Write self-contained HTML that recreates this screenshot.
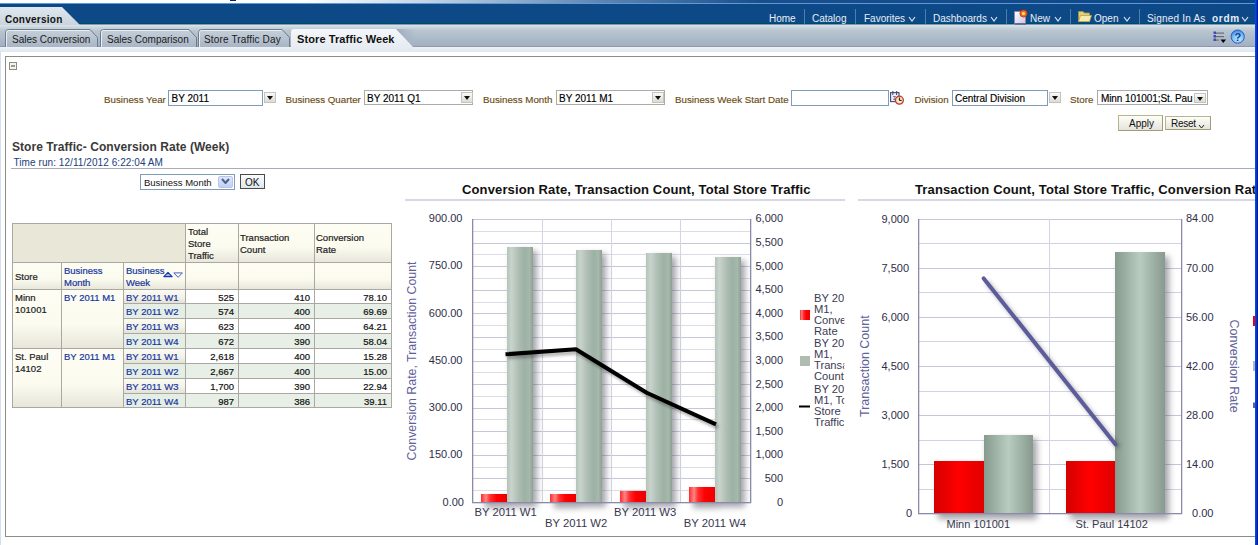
<!DOCTYPE html><html><head><meta charset="utf-8"><style>
*{margin:0;padding:0;box-sizing:border-box}
html,body{width:1258px;height:545px;overflow:hidden;background:#fff;font-family:"Liberation Sans",sans-serif;position:relative}
.a{position:absolute}
.t{position:absolute;white-space:nowrap;line-height:1}
.hl{color:#e8eef6;font-size:10px;top:14px}
.sep{position:absolute;top:9px;width:1px;height:15px;background:#4f7ea8}
.tabt{position:absolute;white-space:nowrap;line-height:1;top:35px;font-size:10px;color:#1a1a1a}
.prm{position:absolute;white-space:nowrap;line-height:1;color:#6a4c14;font-size:9.75px;top:95px;-webkit-text-stroke:0.15px #6a4c14}
.box{position:absolute;background:#fff;border:1px solid #7f9db9}
.gbox{position:absolute;background:#fff;border:1px solid #a9aca8}
.dd{position:absolute;width:12px;height:11px;background:linear-gradient(#fafaf6,#dcdcd4);border:1px solid #c4c4bc}
.dd:after{content:"";position:absolute;left:2px;top:3px;border-left:3.5px solid transparent;border-right:3.5px solid transparent;border-top:4px solid #111}
.bx{position:absolute;white-space:nowrap;line-height:1;font-size:10px;color:#000;top:94px;-webkit-text-stroke-width:0.15px}
.cell{position:absolute;-webkit-text-stroke-width:0.2px;border-right:1px solid #a9a9a1;border-bottom:1px solid #a9a9a1;font-size:9.5px;line-height:12px;white-space:nowrap;overflow:hidden}
.num{text-align:right;padding-right:4px}
.lnk{color:#1636a0}
</style></head><body>
<div class="a" style="left:0;top:0;width:1258px;height:3px;background:linear-gradient(90deg,#fff 0,#fff 300px,#c9d6e3 420px,#5f86b0 600px,#1a4f8a 760px,#0d4584 100%)"></div>
<div class="a" style="left:0;top:3px;width:1258px;height:1px;background:#5b9ae0"></div>
<div class="a" style="left:230px;top:0;width:6px;height:1px;background:#06206e"></div>
<div class="a" style="left:0;top:4px;width:1258px;height:19px;background:#0e4987"></div>
<div class="a" style="left:0;top:22px;width:1258px;height:1px;background:#05507e"></div>
<div class="a" style="left:0;top:23px;width:1258px;height:1px;background:#034672"></div>
<div class="a" style="left:0;top:24px;width:1258px;height:23px;background:linear-gradient(#7e9cb2 0,#7e9cb2 1px,#dce4ea 1px,#c6d2da 4px,#b8c5d0 7px,#adbac8 14px,#a4b0c2 22px)"></div>
<div class="a" style="left:0;top:46px;width:1258px;height:1px;background:#8e9aab"></div>
<div class="a" style="left:0;top:47px;width:1258px;height:5px;background:linear-gradient(#edf2f7,#dfe7ef)"></div>
<div class="a" style="left:0;top:52px;width:1px;height:493px;background:#d2dfee"></div>
<svg class="a" style="left:0;top:7px" width="90" height="18"><defs><linearGradient id="cg" x1="0" y1="0" x2="0" y2="1"><stop offset="0" stop-color="#dfe8ee"/><stop offset="1" stop-color="#c9d4dd"/></linearGradient></defs><path d="M0 0 H62 L80 18 H0 Z" fill="url(#cg)"/></svg>
<div class="t" style="left:5px;top:14.5px;font-size:10px;font-weight:bold;letter-spacing:0.25px;color:#111">Conversion</div>
<div class="t hl" style="left:1147px;letter-spacing:0.2px">Signed In As</div>
<div class="t hl" style="left:769px">Home</div>
<div class="t hl" style="left:812px">Catalog</div>
<div class="t hl" style="left:864px">Favorites</div>
<div class="t hl" style="left:933px">Dashboards</div>
<div class="t hl" style="left:1030px">New</div>
<div class="t hl" style="left:1094px">Open</div>
<div class="t hl" style="left:1212px;font-weight:bold;letter-spacing:0.7px">ordm</div>
<div class="sep" style="left:804px"></div>
<div class="sep" style="left:855px"></div>
<div class="sep" style="left:925px"></div>
<div class="sep" style="left:1006px"></div>
<div class="sep" style="left:1070px"></div>
<div class="sep" style="left:1139px"></div>
<svg class="a" style="left:908px;top:16px" width="8" height="6"><path d="M1 1 L4.0 5 L7 1" fill="none" stroke="#d8e2ee" stroke-width="1.2"/></svg>
<svg class="a" style="left:990px;top:16px" width="8" height="6"><path d="M1 1 L4.0 5 L7 1" fill="none" stroke="#d8e2ee" stroke-width="1.2"/></svg>
<svg class="a" style="left:1054px;top:16px" width="8" height="6"><path d="M1 1 L4.0 5 L7 1" fill="none" stroke="#d8e2ee" stroke-width="1.2"/></svg>
<svg class="a" style="left:1123px;top:16px" width="8" height="6"><path d="M1 1 L4.0 5 L7 1" fill="none" stroke="#d8e2ee" stroke-width="1.2"/></svg>
<svg class="a" style="left:1241px;top:16px" width="8" height="6"><path d="M1 1 L4.0 5 L7 1" fill="none" stroke="#d8e2ee" stroke-width="1.2"/></svg>
<svg class="a" style="left:1013px;top:9px" width="16" height="16"><defs><linearGradient id="pg" x1="0" y1="0" x2="1" y2="1"><stop offset="0" stop-color="#ffffff"/><stop offset="1" stop-color="#c8c4e4"/></linearGradient></defs><path d="M1.5 2.5 H10 L12.5 5 V14.5 H1.5 Z" fill="url(#pg)" stroke="#8a88b0" stroke-width="0.8"/><rect x="2" y="14.5" width="11" height="1" fill="#202048" opacity="0.6"/><circle cx="10.5" cy="4.5" r="3.6" fill="#e8701a" stroke="#c03010" stroke-width="0.8"/><circle cx="10.5" cy="4.5" r="1.6" fill="#ffe070"/></svg>
<svg class="a" style="left:1077px;top:10px" width="16" height="13"><path d="M1.5 1.5 H6 L7.5 3 H12.5 V11.5 H1.5 Z" fill="#e0cf78" stroke="#a8963a" stroke-width="0.8"/><path d="M1.5 11.5 L3.5 5.5 H14.5 L12.5 11.5 Z" fill="#f5ebb0" stroke="#b8a64a" stroke-width="0.8"/></svg>
<svg class="a" style="left:395px;top:29px" width="20" height="18"><defs><linearGradient id="tsh" x1="0" y1="0" x2="1" y2="0"><stop offset="0" stop-color="#8a9aac" stop-opacity="0.7"/><stop offset="1" stop-color="#a8b8c8" stop-opacity="0.2"/></linearGradient></defs><path d="M0 0 H19 V18 Z" fill="url(#tsh)"/></svg>
<svg class="a" style="left:5px;top:29px" width="94" height="18"><defs><linearGradient id="tg5" x1="0" y1="0" x2="0" y2="1"><stop offset="0" stop-color="#c5d0da"/><stop offset="1" stop-color="#a9b5c5"/></linearGradient></defs><path d="M0.5 18 V3.5 Q0.5 0.5 3.5 0.5 H85 L92.5 8.5 V18" fill="url(#tg5)" stroke="#6d7c8c" stroke-width="1"/><path d="M1.5 18 V3.5 Q1.5 1.5 3.5 1.5 H84.5" fill="none" stroke="#e6edf3" stroke-width="1"/></svg>
<svg class="a" style="left:100px;top:29px" width="98" height="18"><defs><linearGradient id="tg100" x1="0" y1="0" x2="0" y2="1"><stop offset="0" stop-color="#c5d0da"/><stop offset="1" stop-color="#a9b5c5"/></linearGradient></defs><path d="M0.5 18 V3.5 Q0.5 0.5 3.5 0.5 H89 L96.5 8.5 V18" fill="url(#tg100)" stroke="#6d7c8c" stroke-width="1"/><path d="M1.5 18 V3.5 Q1.5 1.5 3.5 1.5 H88.5" fill="none" stroke="#e6edf3" stroke-width="1"/></svg>
<svg class="a" style="left:198px;top:29px" width="93" height="18"><defs><linearGradient id="tg198" x1="0" y1="0" x2="0" y2="1"><stop offset="0" stop-color="#c5d0da"/><stop offset="1" stop-color="#a9b5c5"/></linearGradient></defs><path d="M0.5 18 V3.5 Q0.5 0.5 3.5 0.5 H84 L91.5 8.5 V18" fill="url(#tg198)" stroke="#6d7c8c" stroke-width="1"/><path d="M1.5 18 V3.5 Q1.5 1.5 3.5 1.5 H83.5" fill="none" stroke="#e6edf3" stroke-width="1"/></svg>
<svg class="a" style="left:291px;top:29px" width="123" height="23"><defs><linearGradient id="ag" x1="0" y1="0" x2="0" y2="1"><stop offset="0" stop-color="#f4f7fa"/><stop offset="1" stop-color="#e2e9f0"/></linearGradient></defs><path d="M0 23 V3 Q0 0 3 0 H105 L122 18 V23 Z" fill="url(#ag)"/></svg>
<div class="tabt" style="left:12px">Sales Conversion</div>
<div class="tabt" style="left:107px">Sales Comparison</div>
<div class="tabt" style="left:204px;letter-spacing:0.15px">Store Traffic Day</div>
<div class="tabt" style="left:297px;font-weight:bold;font-size:11px;top:34px;letter-spacing:0.1px;color:#111">Store Traffic Week</div>
<svg class="a" style="left:1212px;top:30px" width="16" height="16"><g><rect x="1.5" y="1.5" width="2.5" height="2.5" fill="#4848a8"/><rect x="1.5" y="5" width="2.5" height="2.5" fill="#4848a8"/><rect x="1.5" y="8.5" width="2.5" height="2.5" fill="#4848a8"/><rect x="4" y="2.5" width="8" height="1.2" fill="#6a6a7a"/><rect x="4" y="6" width="8" height="1.2" fill="#6a6a7a"/><rect x="4" y="9.5" width="3" height="1.2" fill="#6a6a7a"/><path d="M8.5 9.5 H14 L11.25 13 Z" fill="#000"/></g></svg>
<svg class="a" style="left:1230px;top:29px" width="16" height="16"><defs><radialGradient id="hg" cx="0.55" cy="0.7" r="0.75"><stop offset="0" stop-color="#c8ecff"/><stop offset="0.55" stop-color="#7ec0f4"/><stop offset="1" stop-color="#2a74d4"/></radialGradient></defs><circle cx="7.7" cy="7.6" r="6.6" fill="url(#hg)" stroke="#2064c8" stroke-width="1"/><text x="7.8" y="11.7" text-anchor="middle" font-family="Liberation Sans" font-weight="bold" font-size="11" fill="#0c3c9c">?</text></svg>
<div class="a" style="left:5px;top:56px;width:1258px;height:481px;border:1px solid #8c8c84;border-right:none"></div>
<div class="a" style="left:9px;top:62px;width:8px;height:8px;border:1px solid #8c8c84;background:#f4f4ec"></div>
<div class="a" style="left:11px;top:65px;width:4px;height:2px;background:#9a9a90"></div>
<div class="prm" style="left:104px">Business Year</div>
<div class="box" style="left:168px;top:90px;width:95px;height:16px"></div>
<div class="bx" style="left:171.5px">BY 2011</div>
<div class="dd" style="left:264px;top:92px"></div>
<div class="prm" style="left:285.5px">Business Quarter</div>
<div class="gbox" style="left:364px;top:90px;width:109px;height:15px"></div>
<div class="bx" style="left:367px">BY 2011 Q1</div>
<div class="dd" style="left:461px;top:92px"></div>
<div class="prm" style="left:483px">Business Month</div>
<div class="gbox" style="left:556px;top:90px;width:109px;height:15px"></div>
<div class="bx" style="left:559px">BY 2011 M1</div>
<div class="dd" style="left:652px;top:92px"></div>
<div class="prm" style="left:675px">Business Week Start Date</div>
<div class="box" style="left:791px;top:90px;width:98px;height:16px"></div>
<svg class="a" style="left:889px;top:90px" width="17" height="17"><defs><radialGradient id="clk" cx="0.5" cy="0.6" r="0.6"><stop offset="0" stop-color="#fff6dc"/><stop offset="1" stop-color="#f2c890"/></radialGradient></defs><rect x="1.6" y="2.6" width="8.4" height="9" fill="#f0f0fa" stroke="#42428e" stroke-width="1.1"/><path d="M3.8 1 V5 M7.6 1 V5" stroke="#505050" stroke-width="1.1"/><path d="M4 6.5 H6.5 L4.5 9.5 H7" stroke="#707070" stroke-width="0.9" fill="none"/><circle cx="10.4" cy="10.2" r="4" fill="url(#clk)" stroke="#b83a34" stroke-width="1.2"/><path d="M10.4 7.6 V10.4 H12.6" stroke="#111" stroke-width="1" fill="none"/></svg>
<div class="prm" style="left:914.5px">Division</div>
<div class="box" style="left:952px;top:90px;width:96px;height:16px"></div>
<div class="bx" style="left:955px">Central Division</div>
<div class="dd" style="left:1049px;top:92px"></div>
<div class="prm" style="left:1070px">Store</div>
<div class="gbox" style="left:1097px;top:90px;width:111px;height:15px;overflow:hidden"></div>
<div class="bx" style="left:1101px;width:93px;overflow:hidden;letter-spacing:-0.1px">Minn 101001;St. Pau</div>
<div class="dd" style="left:1194px;top:93px;height:10px"></div>
<div class="a" style="left:1118px;top:115px;width:45px;height:16px;border:1px solid #b8b48c;border-right-color:#a09c78;border-bottom-color:#a09c78;background:linear-gradient(#fefefa,#e4e4da)"></div>
<div class="t" style="left:1129px;top:119px;font-size:10px;color:#111">Apply</div>
<div class="a" style="left:1165px;top:116px;width:46px;height:14px;border:1px solid #b8b48c;border-right-color:#a09c78;border-bottom-color:#a09c78;background:linear-gradient(#fefefa,#e4e4da)"></div>
<div class="t" style="left:1171px;top:118.5px;font-size:10px;letter-spacing:-0.3px;color:#111">Reset</div>
<svg class="a" style="left:1197.5px;top:123.5px" width="7" height="5"><path d="M1 1 L3.5 4 L6 1" fill="none" stroke="#222" stroke-width="1"/></svg>
<div class="t" style="left:12px;top:141px;font-size:12px;font-weight:bold;letter-spacing:0.06px;color:#3a3a3a">Store Traffic- Conversion Rate (Week)</div>
<div class="t" style="left:13.5px;top:157.5px;font-size:10px;letter-spacing:0.07px;color:#20407a">Time run: 12/11/2012 6:22:04 AM</div>
<div class="a" style="left:11px;top:168px;width:1244px;height:1px;background:#a8acb8"></div>
<div class="a" style="left:140px;top:174px;width:95px;height:16px;border:1px solid #7f9db9;background:#fff"></div>
<div class="t" style="left:144px;top:178px;font-size:9.5px;color:#111">Business Month</div>
<div class="a" style="left:218px;top:176px;width:15px;height:12px;border-radius:2px;background:linear-gradient(#dde6fc,#c2d0f6);border:1px solid #b6c6f0"></div>
<svg class="a" style="left:221px;top:178px" width="9" height="6"><path d="M1 1 L4.5 5 L8 1" fill="none" stroke="#4d6185" stroke-width="2"/></svg>
<div class="a" style="left:240px;top:174px;width:25px;height:15px;border:1px solid #4a4a4a;background:linear-gradient(#fafcfc,#dde8ea)"></div>
<div class="t" style="left:245px;top:177.5px;font-size:10px;color:#111">OK</div>
<div class="a" style="left:12px;top:223px;width:380px;height:1px;background:#a9a9a1"></div>
<div class="a" style="left:12px;top:223px;width:1px;height:185px;background:#a9a9a1"></div>
<div class="cell" style="left:13px;top:224px;width:173px;height:39px;background:#e9e7d7;"></div>
<div class="cell" style="left:186px;top:224px;width:53px;height:39px;background:linear-gradient(#fdfdf3,#fbfbef 60%,#e9e7db);padding:2px 2px 0;line-height:12px;color:#222">Total<br>Store<br>Traffic</div>
<div class="cell" style="left:239px;top:224px;width:76px;height:39px;background:linear-gradient(#fdfdf3,#fbfbef 60%,#e9e7db);padding:8px 1px 0;line-height:12px;color:#222">Transaction<br>Count</div>
<div class="cell" style="left:315px;top:224px;width:77px;height:39px;background:linear-gradient(#fdfdf3,#fbfbef 60%,#e9e7db);padding:8px 1px 0;line-height:12px;color:#222">Conversion<br>Rate</div>
<div class="cell" style="left:13px;top:263px;width:49px;height:27px;background:linear-gradient(#fdfdf3,#fbfbef 60%,#e9e7db);padding:8px 2px;color:#222">Store</div>
<div class="cell" style="left:62px;top:263px;width:62px;height:27px;background:linear-gradient(#fdfdf3,#fbfbef 60%,#e9e7db);padding:2px 2px;color:#1636a0"><span class="lnk">Business<br>Month</span></div>
<div class="cell" style="left:124px;top:263px;width:62px;height:27px;background:linear-gradient(#fdfdf3,#fbfbef 60%,#e9e7db);padding:2px 2px;color:#1636a0"><span class="lnk">Business<br>Week</span></div>
<svg class="a" style="left:162px;top:270px" width="22" height="10"><path d="M1.8 6.6 L6 2.3 L10.2 6.6 Z" fill="#a4b4d0" stroke="#1a38b0" stroke-width="1.1" stroke-linejoin="round"/><path d="M11.8 2.9 H20.4 L16.1 7.3 Z" fill="none" stroke="#4660c8" stroke-width="1" stroke-linejoin="round"/></svg>
<div class="cell" style="left:186px;top:263px;width:53px;height:27px;background:linear-gradient(#fdfdf3,#fbfbef 60%,#e9e7db);"></div>
<div class="cell" style="left:239px;top:263px;width:76px;height:27px;background:linear-gradient(#fdfdf3,#fbfbef 60%,#e9e7db);"></div>
<div class="cell" style="left:315px;top:263px;width:77px;height:27px;background:linear-gradient(#fdfdf3,#fbfbef 60%,#e9e7db);"></div>
<div class="cell" style="left:13px;top:290px;width:49px;height:59px;background:linear-gradient(#fdfdf3,#fbfbf0 60%,#e8e6da);padding:2px 2px 0;line-height:12px;color:#222">Minn<br>101001</div>
<div class="cell" style="left:62px;top:290px;width:62px;height:59px;background:linear-gradient(#fdfdf3,#fbfbf0 60%,#e8e6da);padding:2px 2px 0;line-height:12px;color:#1636a0">BY 2011 M1</div>
<div class="cell" style="left:13px;top:349px;width:49px;height:59px;background:linear-gradient(#fdfdf3,#fbfbf0 60%,#e8e6da);padding:2px 2px 0;line-height:12px;color:#222">St. Paul<br>14102</div>
<div class="cell" style="left:62px;top:349px;width:62px;height:59px;background:linear-gradient(#fdfdf3,#fbfbf0 60%,#e8e6da);padding:2px 2px 0;line-height:12px;color:#1636a0">BY 2011 M1</div>
<div class="cell" style="left:124px;top:290px;width:62px;height:14px;background:linear-gradient(#fbfbf3,#f3f1e7 60%,#e4e2d6);padding:2px 2px 0;color:#1636a0">BY 2011 W1</div>
<div class="cell num" style="left:186px;top:290px;width:53px;height:14px;background:#ffffff;padding-top:2px;color:#111">525</div>
<div class="cell num" style="left:239px;top:290px;width:76px;height:14px;background:#ffffff;padding-top:2px;color:#111">410</div>
<div class="cell num" style="left:315px;top:290px;width:77px;height:14px;background:#ffffff;padding-top:2px;color:#111">78.10</div>
<div class="cell" style="left:124px;top:304px;width:62px;height:15px;background:#e5eee5;padding:2px 2px 0;color:#1636a0">BY 2011 W2</div>
<div class="cell num" style="left:186px;top:304px;width:53px;height:15px;background:#e7efe7;padding-top:2px;color:#111">574</div>
<div class="cell num" style="left:239px;top:304px;width:76px;height:15px;background:#e7efe7;padding-top:2px;color:#111">400</div>
<div class="cell num" style="left:315px;top:304px;width:77px;height:15px;background:#e7efe7;padding-top:2px;color:#111">69.69</div>
<div class="cell" style="left:124px;top:319px;width:62px;height:15px;background:linear-gradient(#fbfbf3,#f3f1e7 60%,#e4e2d6);padding:2px 2px 0;color:#1636a0">BY 2011 W3</div>
<div class="cell num" style="left:186px;top:319px;width:53px;height:15px;background:#ffffff;padding-top:2px;color:#111">623</div>
<div class="cell num" style="left:239px;top:319px;width:76px;height:15px;background:#ffffff;padding-top:2px;color:#111">400</div>
<div class="cell num" style="left:315px;top:319px;width:77px;height:15px;background:#ffffff;padding-top:2px;color:#111">64.21</div>
<div class="cell" style="left:124px;top:334px;width:62px;height:15px;background:#e5eee5;padding:2px 2px 0;color:#1636a0">BY 2011 W4</div>
<div class="cell num" style="left:186px;top:334px;width:53px;height:15px;background:#e7efe7;padding-top:2px;color:#111">672</div>
<div class="cell num" style="left:239px;top:334px;width:76px;height:15px;background:#e7efe7;padding-top:2px;color:#111">390</div>
<div class="cell num" style="left:315px;top:334px;width:77px;height:15px;background:#e7efe7;padding-top:2px;color:#111">58.04</div>
<div class="cell" style="left:124px;top:349px;width:62px;height:15px;background:linear-gradient(#fbfbf3,#f3f1e7 60%,#e4e2d6);padding:2px 2px 0;color:#1636a0">BY 2011 W1</div>
<div class="cell num" style="left:186px;top:349px;width:53px;height:15px;background:#ffffff;padding-top:2px;color:#111">2,618</div>
<div class="cell num" style="left:239px;top:349px;width:76px;height:15px;background:#ffffff;padding-top:2px;color:#111">400</div>
<div class="cell num" style="left:315px;top:349px;width:77px;height:15px;background:#ffffff;padding-top:2px;color:#111">15.28</div>
<div class="cell" style="left:124px;top:364px;width:62px;height:15px;background:#e5eee5;padding:2px 2px 0;color:#1636a0">BY 2011 W2</div>
<div class="cell num" style="left:186px;top:364px;width:53px;height:15px;background:#e7efe7;padding-top:2px;color:#111">2,667</div>
<div class="cell num" style="left:239px;top:364px;width:76px;height:15px;background:#e7efe7;padding-top:2px;color:#111">400</div>
<div class="cell num" style="left:315px;top:364px;width:77px;height:15px;background:#e7efe7;padding-top:2px;color:#111">15.00</div>
<div class="cell" style="left:124px;top:379px;width:62px;height:15px;background:linear-gradient(#fbfbf3,#f3f1e7 60%,#e4e2d6);padding:2px 2px 0;color:#1636a0">BY 2011 W3</div>
<div class="cell num" style="left:186px;top:379px;width:53px;height:15px;background:#ffffff;padding-top:2px;color:#111">1,700</div>
<div class="cell num" style="left:239px;top:379px;width:76px;height:15px;background:#ffffff;padding-top:2px;color:#111">390</div>
<div class="cell num" style="left:315px;top:379px;width:77px;height:15px;background:#ffffff;padding-top:2px;color:#111">22.94</div>
<div class="cell" style="left:124px;top:394px;width:62px;height:14px;background:#e5eee5;padding:2px 2px 0;color:#1636a0">BY 2011 W4</div>
<div class="cell num" style="left:186px;top:394px;width:53px;height:14px;background:#e7efe7;padding-top:2px;color:#111">987</div>
<div class="cell num" style="left:239px;top:394px;width:76px;height:14px;background:#e7efe7;padding-top:2px;color:#111">386</div>
<div class="cell num" style="left:315px;top:394px;width:77px;height:14px;background:#e7efe7;padding-top:2px;color:#111">39.11</div>
<svg class="a" style="left:0;top:0" width="1258" height="545" font-family="Liberation Sans"><defs>
<linearGradient id="red1" x1="0" x2="1" y1="0" y2="0"><stop offset="0" stop-color="#ff2a2a"/><stop offset="0.19" stop-color="#ff8585"/><stop offset="0.35" stop-color="#ff3030"/><stop offset="0.6" stop-color="#ff0000"/><stop offset="1" stop-color="#ec0000"/></linearGradient>
<linearGradient id="grey1" x1="0" x2="1" y1="0" y2="0"><stop offset="0" stop-color="#b4c4b8"/><stop offset="0.17" stop-color="#c9d3cd"/><stop offset="0.45" stop-color="#adbdb2"/><stop offset="0.68" stop-color="#9db1a5"/><stop offset="0.86" stop-color="#a7b8ac"/><stop offset="1" stop-color="#8ea094"/></linearGradient>
<linearGradient id="red2" x1="0" x2="1" y1="0" y2="0"><stop offset="0" stop-color="#d40000"/><stop offset="0.5" stop-color="#ff0000"/><stop offset="1" stop-color="#e00000"/></linearGradient>
<linearGradient id="grey2" x1="0" x2="1" y1="0" y2="0"><stop offset="0" stop-color="#879a8e"/><stop offset="0.5" stop-color="#b8ccc0"/><stop offset="1" stop-color="#88998e"/></linearGradient>
<filter id="blur1" x="-50%" y="-50%" width="200%" height="200%"><feGaussianBlur stdDeviation="1.5"/></filter>
<filter id="blur2" x="-50%" y="-50%" width="200%" height="200%"><feGaussianBlur stdDeviation="2.2"/></filter>
<filter id="sblur" x="-50%" y="-50%" width="200%" height="200%"><feGaussianBlur stdDeviation="3"/></filter>
</defs><rect x="405" y="199" width="440" height="2" fill="#d8d8e4"/><text x="462" y="194" font-size="13" font-weight="bold" letter-spacing="0.13" fill="#111">Conversion Rate, Transaction Count, Total Store Traffic</text><rect x="472" y="219" width="278" height="1" fill="#c6c6da"/><rect x="472" y="231" width="278" height="1" fill="#dcdce8"/><rect x="472" y="243" width="278" height="1" fill="#c6c6da"/><rect x="472" y="254" width="278" height="1" fill="#dcdce8"/><rect x="472" y="266" width="278" height="1" fill="#c6c6da"/><rect x="472" y="278" width="278" height="1" fill="#dcdce8"/><rect x="472" y="290" width="278" height="1" fill="#c6c6da"/><rect x="472" y="302" width="278" height="1" fill="#dcdce8"/><rect x="472" y="313" width="278" height="1" fill="#c6c6da"/><rect x="472" y="325" width="278" height="1" fill="#dcdce8"/><rect x="472" y="337" width="278" height="1" fill="#c6c6da"/><rect x="472" y="349" width="278" height="1" fill="#dcdce8"/><rect x="472" y="361" width="278" height="1" fill="#c6c6da"/><rect x="472" y="372" width="278" height="1" fill="#dcdce8"/><rect x="472" y="384" width="278" height="1" fill="#c6c6da"/><rect x="472" y="396" width="278" height="1" fill="#dcdce8"/><rect x="472" y="408" width="278" height="1" fill="#c6c6da"/><rect x="472" y="419" width="278" height="1" fill="#dcdce8"/><rect x="472" y="431" width="278" height="1" fill="#c6c6da"/><rect x="472" y="443" width="278" height="1" fill="#dcdce8"/><rect x="472" y="455" width="278" height="1" fill="#c6c6da"/><rect x="472" y="467" width="278" height="1" fill="#dcdce8"/><rect x="472" y="478" width="278" height="1" fill="#c6c6da"/><rect x="472" y="490" width="278" height="1" fill="#dcdce8"/><rect x="542" y="219" width="1" height="283" fill="#d4d4e4"/><rect x="611" y="219" width="1" height="283" fill="#d4d4e4"/><rect x="680" y="219" width="1" height="283" fill="#d4d4e4"/><g filter="url(#sblur)" opacity="0.55"><rect x="511" y="251.0" width="26" height="256.0" fill="#585868"/><rect x="485" y="498.1" width="26" height="9.9" fill="#585868"/><rect x="580" y="253.8" width="26" height="253.2" fill="#585868"/><rect x="554" y="498.1" width="26" height="9.9" fill="#585868"/><rect x="650" y="256.6" width="26" height="250.4" fill="#585868"/><rect x="624" y="494.7" width="26" height="13.3" fill="#585868"/><rect x="719" y="260.7" width="26" height="246.3" fill="#585868"/><rect x="693" y="491.2" width="26" height="16.8" fill="#585868"/></g><rect x="481" y="494" width="26" height="8" fill="url(#red1)"/><rect x="507" y="247" width="26" height="255" fill="url(#grey1)"/><rect x="550" y="494" width="26" height="8" fill="url(#red1)"/><rect x="576" y="250" width="26" height="252" fill="url(#grey1)"/><rect x="620" y="491" width="26" height="11" fill="url(#red1)"/><rect x="646" y="253" width="26" height="249" fill="url(#grey1)"/><rect x="689" y="487" width="26" height="15" fill="url(#red1)"/><rect x="715" y="257" width="26" height="245" fill="url(#grey1)"/><rect x="472" y="219" width="1.3" height="284" fill="#8a8aac"/><rect x="750" y="219" width="1.3" height="284" fill="#8a8aac"/><rect x="472" y="502" width="279" height="1.3" fill="#8a8aac"/><polyline points="507.5,357.3 577.9,352.3 648.7,395.7 718,427.4" fill="none" stroke="#000" stroke-opacity="0.3" stroke-width="4" filter="url(#blur1)"/><polyline points="505.5,354.3 575.9,349.3 646.7,392.7 716,424.4" fill="none" stroke="#000" stroke-width="4" stroke-linejoin="round"/><text x="462.5" y="222.2" text-anchor="end" font-size="11" fill="#2e2e48">900.00</text><text x="462.5" y="269.4" text-anchor="end" font-size="11" fill="#2e2e48">750.00</text><text x="462.5" y="316.5" text-anchor="end" font-size="11" fill="#2e2e48">600.00</text><text x="462.5" y="363.7" text-anchor="end" font-size="11" fill="#2e2e48">450.00</text><text x="462.5" y="410.9" text-anchor="end" font-size="11" fill="#2e2e48">300.00</text><text x="462.5" y="458.0" text-anchor="end" font-size="11" fill="#2e2e48">150.00</text><text x="464" y="506.2" text-anchor="end" font-size="11" fill="#2e2e48">0.00</text><text x="783" y="222.4" text-anchor="end" font-size="11" fill="#2e2e48">6,000</text><text x="783" y="246.0" text-anchor="end" font-size="11" fill="#2e2e48">5,500</text><text x="783" y="269.6" text-anchor="end" font-size="11" fill="#2e2e48">5,000</text><text x="783" y="293.1" text-anchor="end" font-size="11" fill="#2e2e48">4,500</text><text x="783" y="316.7" text-anchor="end" font-size="11" fill="#2e2e48">4,000</text><text x="783" y="340.3" text-anchor="end" font-size="11" fill="#2e2e48">3,500</text><text x="783" y="363.9" text-anchor="end" font-size="11" fill="#2e2e48">3,000</text><text x="783" y="387.5" text-anchor="end" font-size="11" fill="#2e2e48">2,500</text><text x="783" y="411.1" text-anchor="end" font-size="11" fill="#2e2e48">2,000</text><text x="783" y="434.6" text-anchor="end" font-size="11" fill="#2e2e48">1,500</text><text x="783" y="458.2" text-anchor="end" font-size="11" fill="#2e2e48">1,000</text><text x="783" y="481.8" text-anchor="end" font-size="11" fill="#2e2e48">500</text><text x="783" y="506.2" text-anchor="end" font-size="11" fill="#2e2e48">0</text><text transform="translate(416,460.5) rotate(-90)" font-size="12.35" fill="#60609a">Conversion Rate, Transaction Count</text><text x="505.6" y="516" text-anchor="middle" font-size="11.3" fill="#38384e">BY 2011 W1</text><text x="576.1" y="526.6" text-anchor="middle" font-size="11.3" fill="#38384e">BY 2011 W2</text><text x="645.1" y="516" text-anchor="middle" font-size="11.3" fill="#38384e">BY 2011 W3</text><text x="714.9" y="526.6" text-anchor="middle" font-size="11.3" fill="#38384e">BY 2011 W4</text><defs><clipPath id="lc"><rect x="810" y="280" width="34.3" height="160"/></clipPath></defs><rect x="800" y="310" width="10" height="10" fill="url(#red1)"/><rect x="800" y="356" width="10" height="10" fill="#aebcb2"/><rect x="799" y="405.5" width="11" height="2" fill="#000"/><g clip-path="url(#lc)"><text x="814" y="301.5" font-size="11.2" fill="#3c3c54">BY 2011</text><text x="814" y="312.5" font-size="11.2" fill="#3c3c54">M1,</text><text x="814" y="323.5" font-size="11.2" fill="#3c3c54">Conversion</text><text x="814" y="334.5" font-size="11.2" fill="#3c3c54">Rate</text><text x="814" y="346.5" font-size="11.2" fill="#3c3c54">BY 2011</text><text x="814" y="358.0" font-size="11.2" fill="#3c3c54">M1,</text><text x="814" y="369.0" font-size="11.2" fill="#3c3c54">Transaction</text><text x="814" y="380.0" font-size="11.2" fill="#3c3c54">Count</text><text x="814" y="393.0" font-size="11.2" fill="#3c3c54">BY 2011</text><text x="814" y="404.0" font-size="11.2" fill="#3c3c54">M1, Total</text><text x="814" y="414.5" font-size="11.2" fill="#3c3c54">Store</text><text x="814" y="425.5" font-size="11.2" fill="#3c3c54">Traffic</text></g><rect x="858" y="199" width="397" height="2" fill="#d8d8e4"/><defs><clipPath id="tc"><rect x="858" y="170" width="397" height="40"/></clipPath></defs><text clip-path="url(#tc)" x="915" y="194" font-size="13" font-weight="bold" letter-spacing="0.13" fill="#111">Transaction Count, Total Store Traffic, Conversion Rate</text><rect x="918" y="219" width="263" height="1" fill="#c6c6da"/><rect x="918" y="243" width="263" height="1" fill="#d2d2e2"/><rect x="918" y="268" width="263" height="1" fill="#c6c6da"/><rect x="918" y="292" width="263" height="1" fill="#d2d2e2"/><rect x="918" y="317" width="263" height="1" fill="#c6c6da"/><rect x="918" y="341" width="263" height="1" fill="#d2d2e2"/><rect x="918" y="366" width="263" height="1" fill="#c6c6da"/><rect x="918" y="391" width="263" height="1" fill="#d2d2e2"/><rect x="918" y="415" width="263" height="1" fill="#c6c6da"/><rect x="918" y="440" width="263" height="1" fill="#d2d2e2"/><rect x="918" y="464" width="263" height="1" fill="#c6c6da"/><rect x="918" y="489" width="263" height="1" fill="#d2d2e2"/><rect x="1049" y="219" width="1" height="294" fill="#d4d4e4"/><g filter="url(#sblur)" opacity="0.55"><rect x="987" y="438.8" width="50" height="80.2" fill="#585868"/><rect x="938" y="464.7" width="50" height="54.3" fill="#585868"/><rect x="1119" y="256.6" width="50" height="262.4" fill="#585868"/><rect x="1070" y="465.5" width="50" height="53.5" fill="#585868"/></g><rect x="934" y="461" width="50" height="52" fill="url(#red2)"/><rect x="984" y="435" width="49" height="78" fill="url(#grey2)"/><rect x="1066" y="461" width="49" height="52" fill="url(#red2)"/><rect x="1115" y="252" width="50" height="261" fill="url(#grey2)"/><rect x="918" y="219" width="1.3" height="295" fill="#8a8aac"/><rect x="1181" y="219" width="1.3" height="295" fill="#8a8aac"/><rect x="918" y="513" width="264" height="1.3" fill="#8a8aac"/><line x1="986.5" y1="281.5" x2="1118.5" y2="447.5" stroke="#000" stroke-opacity="0.28" stroke-width="4.5" filter="url(#blur2)"/><line x1="983.7" y1="278.4" x2="1115.6" y2="444.5" stroke="#5c5c9c" stroke-width="4" stroke-linecap="round"/><text x="909" y="223.0" text-anchor="end" font-size="11" fill="#2e2e48">9,000</text><text x="1213.5" y="222.0" text-anchor="end" font-size="11" fill="#2e2e48">84.00</text><text x="909" y="272.0" text-anchor="end" font-size="11" fill="#2e2e48">7,500</text><text x="1213.5" y="272.0" text-anchor="end" font-size="11" fill="#2e2e48">70.00</text><text x="909" y="321.0" text-anchor="end" font-size="11" fill="#2e2e48">6,000</text><text x="1213.5" y="321.0" text-anchor="end" font-size="11" fill="#2e2e48">56.00</text><text x="909" y="370.0" text-anchor="end" font-size="11" fill="#2e2e48">4,500</text><text x="1213.5" y="370.0" text-anchor="end" font-size="11" fill="#2e2e48">42.00</text><text x="909" y="419.0" text-anchor="end" font-size="11" fill="#2e2e48">3,000</text><text x="1213.5" y="419.0" text-anchor="end" font-size="11" fill="#2e2e48">28.00</text><text x="909" y="468.0" text-anchor="end" font-size="11" fill="#2e2e48">1,500</text><text x="1213.5" y="468.0" text-anchor="end" font-size="11" fill="#2e2e48">14.00</text><text x="912" y="517.0" text-anchor="end" font-size="11" fill="#2e2e48">0</text><text x="1213.5" y="517.0" text-anchor="end" font-size="11" fill="#2e2e48">0.00</text><text transform="translate(869.3,417) rotate(-90)" font-size="12.5" fill="#60609a">Transaction Count</text><text transform="translate(1230.3,319.5) rotate(90)" font-size="12.5" fill="#60609a">Conversion Rate</text><text x="978.3" y="528" text-anchor="middle" font-size="11" fill="#38384e">Minn 101001</text><text x="1111.7" y="528" text-anchor="middle" font-size="11" fill="#38384e">St. Paul 14102</text><rect x="1253" y="316" width="2" height="10" fill="#f00000"/><rect x="1253" y="361" width="2" height="10" fill="#aebcb2"/><rect x="1253" y="402.5" width="2" height="5.5" fill="#6060a0"/></svg>
<div class="a" style="left:1255px;top:0;width:3px;height:545px;background:linear-gradient(90deg,#0046f4 0,#0046f4 1px,#0036d4 1px,#0036d4 2px,#001a8c 2px)"></div>
</body></html>
